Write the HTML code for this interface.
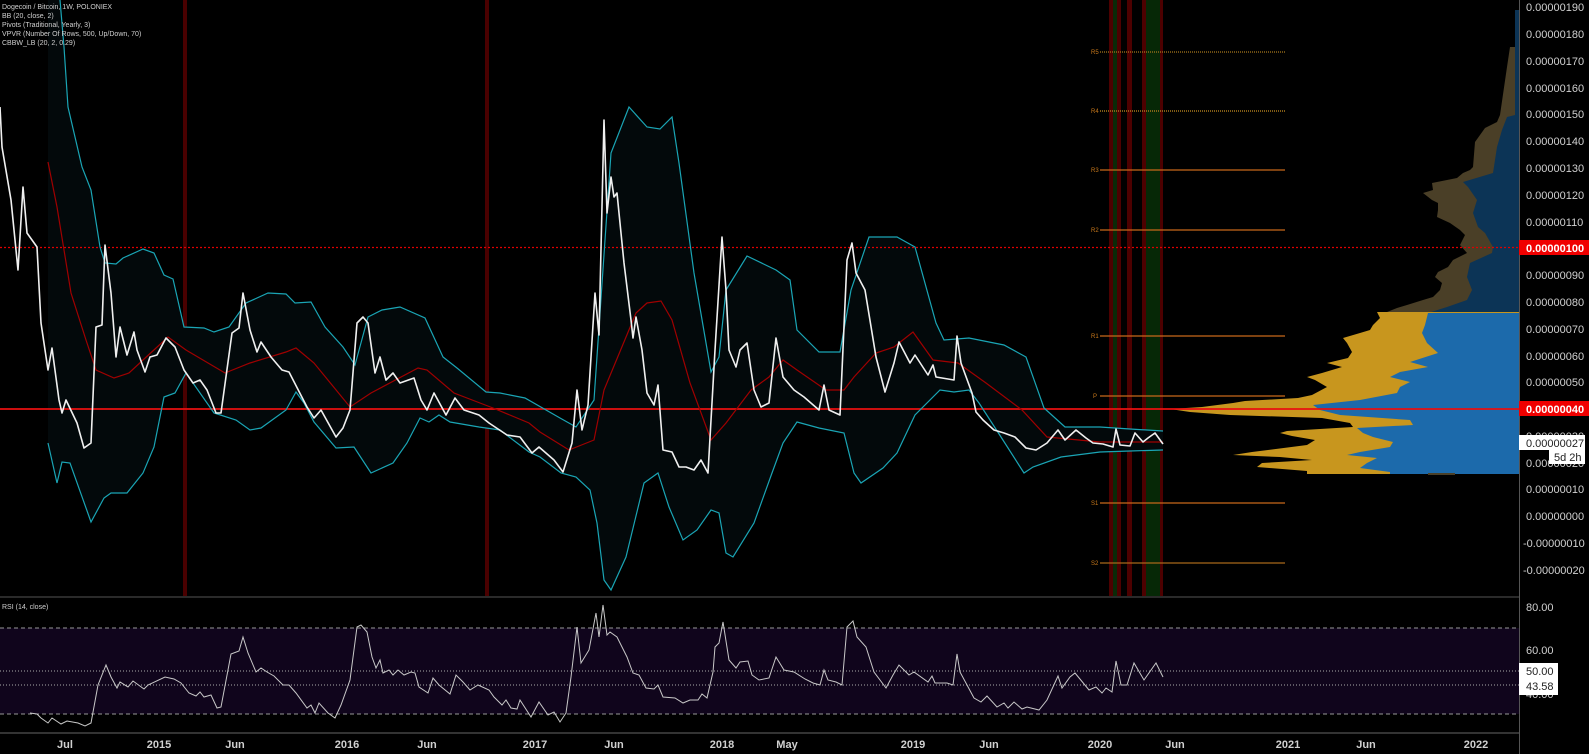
<!DOCTYPE html>
<html><head><meta charset="utf-8"><style>
html,body{margin:0;padding:0;background:#000;}
body{width:1589px;height:754px;overflow:hidden;position:relative;font-family:"Liberation Sans",sans-serif;}
svg{position:absolute;left:0;top:0;}
</style></head><body>
<svg width="1589" height="754" viewBox="0 0 1589 754" xmlns="http://www.w3.org/2000/svg">
<rect width="1589" height="754" fill="#000"/>
<!-- vertical bands main pane -->
<g>
<rect x="183" y="0" width="4" height="596" fill="#4a0000"/>
<rect x="485" y="0" width="4" height="596" fill="#4a0000"/>
<rect x="1109" y="0" width="4" height="596" fill="#4d0000"/>
<rect x="1113" y="0" width="4" height="596" fill="#0a2a08"/>
<rect x="1117" y="0" width="4" height="596" fill="#4d0000"/>
<rect x="1127" y="0" width="5" height="596" fill="#4d0000"/>
<rect x="1142" y="0" width="4" height="596" fill="#4d0000"/>
<rect x="1146" y="0" width="14" height="596" fill="#062806"/>
<rect x="1160" y="0" width="3" height="596" fill="#4d0000"/>
</g>
<!-- BB fill -->
<polygon fill="#03090b" points="48,0 60,0 64,47 68,107 82,167 91,190 100,247 105,263 116,264 123,258 143,249 154,253 164,275 173,279 184,327 204,328 214,332 229,327 246,303 268,293 286,294 295,303 311,302 325,327 343,347 355,365 368,317 382,310 400,307 425,318 443,357 457,368 486,392 500,393 525,398 560,418 576,427 594,400 611,153 629,107 647,127 660,129 672,117 679,163 694,273 711,372 719,357 726,290 747,256 776,270 790,280 797,330 819,352 840,352 851,290 869,237 897,237 915,247 936,323 944,340 969,338 1004,345 1026,357 1044,408 1065,427 1100,427 1130,429 1163,431 1163,450 1130,451 1100,452 1061,457 1033,467 1024,473 1001,437 979,403 969,390 954,392 940,390 915,415 897,453 883,468 861,483 854,473 844,433 819,428 797,422 783,443 772,473 754,523 733,557 726,553 719,513 711,510 697,530 683,540 669,507 658,473 644,483 626,557 611,590 604,580 597,523 590,490 576,477 561,473 540,457 529,452 500,430 479,427 450,422 439,415 429,422 420,418 407,443 393,463 371,473 354,447 336,448 314,422 304,403 296,392 286,410 261,428 250,430 236,420 214,413 186,373 175,393 164,397 154,447 143,473 127,493 111,493 104,498 91,522 70,463 62,462 57,483 48,443"/>
<!-- pivots -->
<g stroke-width="1.2">
<line x1="1100" y1="52" x2="1285" y2="52" stroke="#a8781c" stroke-dasharray="1 1"/>
<line x1="1100" y1="111" x2="1285" y2="111" stroke="#a8781c" stroke-width="1.5" stroke-dasharray="1 1"/>
<line x1="1100" y1="170" x2="1285" y2="170" stroke="#c8681a"/>
<line x1="1100" y1="230" x2="1285" y2="230" stroke="#c8681a"/>
<line x1="1100" y1="336" x2="1285" y2="336" stroke="#c8681a"/>
<line x1="1100" y1="396" x2="1285" y2="396" stroke="#c8681a"/>
<line x1="1100" y1="503" x2="1285" y2="503" stroke="#c8681a"/>
<line x1="1100" y1="563" x2="1285" y2="563" stroke="#a8681a"/>
</g>
<g font-size="6" fill="#c8781a">
<text x="1091" y="54">R5</text><text x="1091" y="113">R4</text><text x="1091" y="172">R3</text><text x="1091" y="232">R2</text><text x="1091" y="338">R1</text><text x="1093" y="398">P</text><text x="1091" y="505">S1</text><text x="1091" y="565">S2</text>
</g>
<!-- VPVR upper -->
<polygon fill="#4a3f27" points="1510,47 1507,67 1500,115 1497,122 1485,128 1475,142 1473,167 1470,170 1463,173 1457,178 1432,183 1433,190 1423,193 1432,200 1438,203 1438,210 1437,217 1450,223 1460,230 1465,235 1460,245 1467,253 1453,260 1448,267 1438,272 1435,277 1442,283 1440,290 1433,297 1423,300 1407,305 1397,308 1387,312 1519,312 1519,47"/>
<polygon fill="#0c3456" points="1515,10 1515,115 1507,117 1502,130 1497,147 1493,173 1463,182 1468,187 1477,200 1473,213 1478,227 1485,233 1493,247 1492,253 1470,263 1467,277 1472,290 1467,300 1447,307 1428,313 1519,313 1519,10"/>
<!-- VPVR lower -->
<polygon fill="#c8961e" points="1377,312 1380,318 1373,325 1370,330 1360,333 1343,338 1347,343 1352,352 1348,358 1327,363 1342,367 1322,373 1307,377 1315,380 1327,387 1312,395 1298,398 1245,401 1233,403 1202,407 1170,409 1190,412 1230,415 1322,418 1350,423 1353,427 1287,431 1280,433 1292,436 1315,440 1307,445 1252,452 1233,455 1280,457 1312,460 1262,463 1257,467 1307,471 1307,474 1519,474 1519,312"/>
<polygon fill="#1c6aab" points="1428,313 1425,325 1422,333 1427,343 1438,353 1410,362 1428,367 1400,372 1390,377 1410,382 1400,387 1397,393 1360,400 1313,405 1320,410 1340,415 1410,420 1413,425 1357,428 1363,433 1373,437 1393,442 1390,447 1360,452 1347,455 1377,458 1367,463 1360,468 1390,472 1390,474 1519,474 1519,313"/>
<rect x="1428" y="473" width="27" height="2" fill="#4a3f27"/>
<!-- horizontal lines -->
<line x1="0" y1="247.5" x2="1519" y2="247.5" stroke="#e00000" stroke-width="1.2" stroke-dasharray="2 2"/>
<line x1="0" y1="409" x2="1519" y2="409" stroke="#e81010" stroke-width="1.8"/>
<!-- BB lines -->
<g fill="none" stroke-width="1.2">
<polyline stroke="#1aa5b5" points="60,0 64,47 68,107 82,167 91,190 100,247 105,263 116,264 123,258 143,249 154,253 164,275 173,279 184,327 204,328 214,332 229,327 246,303 268,293 286,294 295,303 311,302 325,327 343,347 355,365 368,317 382,310 400,307 425,318 443,357 457,368 486,392 500,393 525,398 560,418 576,427 594,400 611,153 629,107 647,127 660,129 672,117 679,163 694,273 711,372 719,357 726,290 747,256 776,270 790,280 797,330 819,352 840,352 851,290 869,237 897,237 915,247 936,323 944,340 969,338 1004,345 1026,357 1044,408 1065,427 1100,427 1130,429 1163,431"/>
<polyline stroke="#1aa5b5" points="48,443 57,483 62,462 70,463 91,522 104,498 111,493 127,493 143,473 154,447 164,397 175,393 186,373 214,413 236,420 250,430 261,428 286,410 296,392 304,403 314,422 336,448 354,447 371,473 393,463 407,443 420,418 429,422 439,415 450,422 479,427 500,430 529,452 540,457 561,473 576,477 590,490 597,523 604,580 611,590 626,557 644,483 658,473 669,507 683,540 697,530 711,510 719,513 726,553 733,557 754,523 772,473 783,443 797,422 819,428 844,433 854,473 861,483 883,468 897,453 915,415 940,390 954,392 969,390 979,403 1001,437 1024,473 1033,467 1061,457 1100,452 1130,451 1163,450"/>
<polyline stroke="#a00000" points="48,162 57,207 71,293 86,340 96,370 114,378 129,373 143,360 168,337 186,350 225,373 250,363 286,352 296,348 314,363 350,407 371,393 418,368 427,370 454,393 493,408 529,423 540,432 569,450 594,440 604,390 636,313 647,303 661,301 672,320 690,383 711,440 726,423 751,390 769,377 783,360 797,370 826,390 844,390 854,377 876,353 894,347 913,332 933,360 958,363 986,383 1022,410 1047,437 1100,442 1130,442 1163,442"/>
<polyline stroke="#f0f0f0" stroke-width="1.6" stroke-linejoin="round" points="0,107 2,147 11,200 18,270 23,187 27,233 37,247 41,323 48,370 52,348 59,400 62,413 66,400 77,423 84,448 91,443 96,327 102,325 105,245 111,293 116,357 120,327 127,355 134,332 137,350 145,372 150,357 157,355 166,338 175,347 184,370 193,383 200,380 207,390 216,413 221,413 232,333 239,328 243,293 250,330 257,352 261,342 271,357 282,370 289,372 307,407 314,418 321,410 336,437 343,428 350,410 357,323 363,317 368,323 375,373 380,357 386,380 393,373 400,383 414,378 421,400 427,410 434,393 446,415 455,398 464,410 479,415 489,423 507,435 520,437 532,453 539,447 554,460 563,472 572,443 577,390 582,430 588,405 595,293 599,335 604,120 607,213 611,177 614,197 617,193 624,263 631,320 633,338 636,317 642,350 647,393 654,405 658,385 663,450 672,452 679,467 686,467 694,470 701,460 708,473 715,350 722,237 726,290 729,350 736,367 740,350 747,343 754,390 761,407 769,403 776,338 783,377 794,390 804,397 819,410 824,385 829,410 840,415 847,260 852,243 856,273 865,290 876,357 885,392 894,363 899,342 910,363 915,355 928,375 933,365 936,377 954,380 957,336 961,363 972,393 976,412 983,420 994,430 1004,433 1015,437 1026,448 1036,450 1047,443 1058,430 1065,440 1076,430 1086,438 1093,443 1103,444 1113,447 1116,429 1120,445 1130,446 1135,433 1143,442 1148,438 1155,433 1163,444"/>
</g>
<!-- pane divider -->
<line x1="0" y1="597" x2="1519" y2="597" stroke="#555" stroke-width="1"/>
<line x1="1519.5" y1="0" x2="1519.5" y2="754" stroke="#555" stroke-width="1"/>
<!-- RSI -->
<rect x="0" y="628" width="1519" height="86" fill="#10051c"/>
<line x1="0" y1="628" x2="1519" y2="628" stroke="#999" stroke-dasharray="4 3"/>
<line x1="0" y1="714" x2="1519" y2="714" stroke="#999" stroke-dasharray="4 3"/>
<line x1="0" y1="671" x2="1519" y2="671" stroke="#aaa" stroke-dasharray="1 2"/>
<line x1="0" y1="685" x2="1519" y2="685" stroke="#aaa" stroke-dasharray="1 2"/>
<polyline fill="none" stroke="#c8c8c8" stroke-width="1" points="30,713 37,714 41,718 48,723 52,718 61,724 67,721 78,723 85,726 91,723 98,685 106,665 111,677 117,688 120,682 128,687 133,681 144,689 148,685 165,677 174,679 181,683 189,693 196,696 200,692 204,697 211,695 217,708 221,707 231,654 239,651 243,637 248,653 256,672 261,668 267,672 274,676 283,685 289,685 296,693 307,708 311,705 315,713 319,703 328,713 335,718 341,705 350,680 357,627 361,625 367,632 372,657 376,668 380,660 383,673 389,670 393,675 398,670 404,675 411,672 415,673 419,687 428,693 433,678 439,685 450,694 456,675 463,682 470,690 478,685 489,690 494,697 502,705 506,700 511,708 517,709 520,700 531,717 539,702 548,715 554,712 560,722 566,713 571,677 577,627 581,663 589,650 596,613 599,637 603,605 607,635 610,632 617,637 627,657 633,673 639,675 646,688 654,689 658,685 663,697 675,698 683,703 690,700 698,700 702,694 707,698 713,672 715,647 719,643 723,622 729,660 736,668 740,662 748,661 752,675 759,680 769,678 776,657 784,670 794,672 805,679 813,683 820,685 824,670 828,680 836,682 842,685 847,627 853,621 857,637 866,647 874,672 886,688 893,675 899,665 909,675 914,672 928,682 932,676 935,683 947,683 953,685 957,654 960,672 974,698 981,702 987,696 997,707 1004,703 1008,708 1014,702 1022,709 1027,707 1039,710 1047,700 1058,676 1062,688 1070,677 1075,673 1089,690 1096,687 1102,693 1106,688 1112,692 1116,661 1121,685 1127,685 1134,663 1144,680 1156,663 1163,677"/>
<line x1="0" y1="733" x2="1519" y2="733" stroke="#666" stroke-width="1"/>
<!-- legend -->
<g font-size="7" fill="#d0d0d0">
<text x="2" y="9">Dogecoin / Bitcoin, 1W, POLONIEX</text>
<text x="2" y="18">BB (20, close, 2)</text>
<text x="2" y="27">Pivots (Traditional, Yearly, 3)</text>
<text x="2" y="36">VPVR (Number Of Rows, 500, Up/Down, 70)</text>
<text x="2" y="45">CBBW_LB (20, 2, 0.29)</text>
<text x="2" y="609">RSI (14, close)</text>
</g>
<!-- price axis -->
<g font-size="11" fill="#d0d0d0">
<text x="1526" y="11">0.00000190</text>
<text x="1526" y="38">0.00000180</text>
<text x="1526" y="65">0.00000170</text>
<text x="1526" y="92">0.00000160</text>
<text x="1526" y="118">0.00000150</text>
<text x="1526" y="145">0.00000140</text>
<text x="1526" y="172">0.00000130</text>
<text x="1526" y="199">0.00000120</text>
<text x="1526" y="226">0.00000110</text>
<text x="1526" y="279">0.00000090</text>
<text x="1526" y="306">0.00000080</text>
<text x="1526" y="333">0.00000070</text>
<text x="1526" y="360">0.00000060</text>
<text x="1526" y="386">0.00000050</text>
<text x="1526" y="440">0.00000030</text>
<text x="1526" y="467">0.00000020</text>
<text x="1526" y="493">0.00000010</text>
<text x="1526" y="520">0.00000000</text>
<text x="1523" y="547">-0.00000010</text>
<text x="1523" y="574">-0.00000020</text>
<text x="1526" y="611">80.00</text>
<text x="1526" y="654">60.00</text>
<text x="1526" y="698">40.00</text>
</g>
<rect x="1519" y="240" width="70" height="15" fill="#f00000"/>
<text x="1526" y="252" font-size="11" fill="#fff" font-weight="bold">0.00000100</text>
<rect x="1519" y="401" width="70" height="15" fill="#f00000"/>
<text x="1526" y="413" font-size="11" fill="#fff" font-weight="bold">0.00000040</text>
<rect x="1519" y="435" width="66" height="15" fill="#fff"/>
<text x="1526" y="447" font-size="11" fill="#222">0.00000027</text>
<rect x="1549" y="450" width="36" height="14" fill="#fff"/>
<text x="1554" y="461" font-size="11" fill="#222">5d 2h</text>
<rect x="1519" y="663" width="39" height="32" fill="#fff"/>
<text x="1526" y="675" font-size="11" fill="#222">50.00</text>
<text x="1526" y="690" font-size="11" fill="#222">43.58</text>
<!-- time axis -->
<g font-size="11" fill="#d0d0d0" font-weight="bold" text-anchor="middle">
<text x="65" y="748">Jul</text>
<text x="159" y="748">2015</text>
<text x="235" y="748">Jun</text>
<text x="347" y="748">2016</text>
<text x="427" y="748">Jun</text>
<text x="535" y="748">2017</text>
<text x="614" y="748">Jun</text>
<text x="722" y="748">2018</text>
<text x="787" y="748">May</text>
<text x="913" y="748">2019</text>
<text x="989" y="748">Jun</text>
<text x="1100" y="748">2020</text>
<text x="1175" y="748">Jun</text>
<text x="1288" y="748">2021</text>
<text x="1366" y="748">Jun</text>
<text x="1476" y="748">2022</text>
</g>
</svg>
</body></html>
